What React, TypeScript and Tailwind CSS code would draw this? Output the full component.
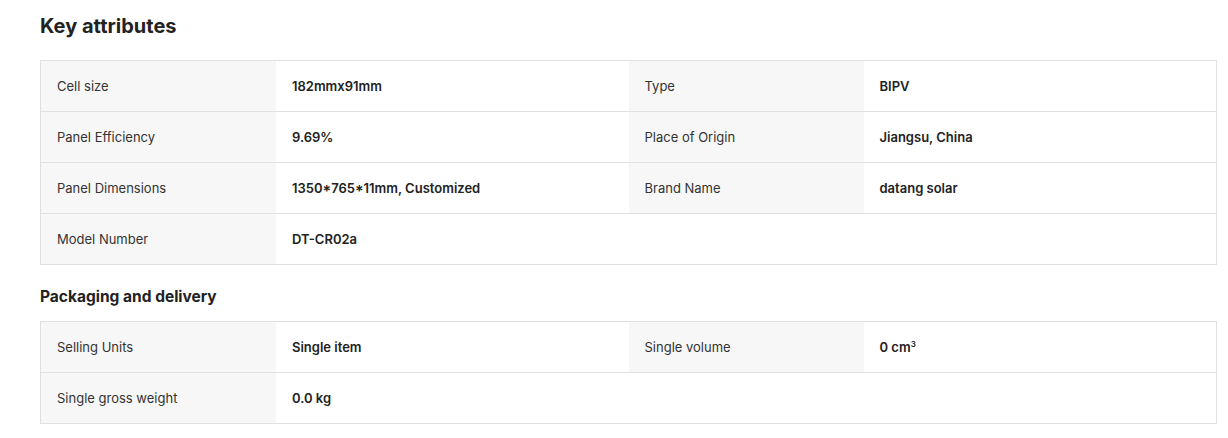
import React from "react";

type Attr = { label: string; value: React.ReactNode };

const keyAttrs: Attr[] = [
  { label: "Cell size", value: "182mmx91mm" },
  { label: "Type", value: "BIPV" },
  { label: "Panel Efficiency", value: "9.69%" },
  { label: "Place of Origin", value: "Jiangsu, China" },
  { label: "Panel Dimensions", value: "1350*765*11mm, Customized" },
  { label: "Brand Name", value: "datang solar" },
  { label: "Model Number", value: "DT-CR02a" },
];

const packaging: Attr[] = [
  { label: "Selling Units", value: "Single item" },
  {
    label: "Single volume",
    value: (
      <>
        0 cm<sup className="text-[8px]">3</sup>
      </>
    ),
  },
  { label: "Single gross weight", value: "0.0 kg" },
];

const AttrTable = ({ items }: { items: Attr[] }) => {
  // pair items two per row
  const rows: Attr[][] = [];
  for (let i = 0; i < items.length; i += 2) rows.push(items.slice(i, i + 2));

  return (
    <div className="border border-[#e0e0e0]">
      {rows.map((row, i) => (
        <div
          key={i}
          className={`grid h-[50px] grid-cols-[20fr_30fr_20fr_30fr] ${
            i > 0 ? "box-content border-t border-[#e0e0e0]" : ""
          }`}
        >
          {row.map((a) => (
            <React.Fragment key={a.label}>
              <div className="flex items-center bg-[#f7f7f7] px-4 pt-[2px] text-[13px] text-[#333]">
                {a.label}
              </div>
              <div className="flex items-center px-4 pt-[2px] text-[13px] font-semibold text-[#222]">
                {a.value}
              </div>
            </React.Fragment>
          ))}
        </div>
      ))}
    </div>
  );
}

export default function App() {
  return (
    <div className="min-h-[438px] bg-white pl-10 pr-[11px] pt-[12px] font-['Inter',sans-serif] text-[#222]">
      <h2 className="text-[20px] font-bold leading-[28px] text-[#222]">
        Key attributes
      </h2>
      <div className="mt-[20px]">
        <AttrTable items={keyAttrs} />
      </div>
      <h3 className="mt-[21px] text-[15.5px] font-bold leading-[22px] text-[#222]">
        Packaging and delivery
      </h3>
      <div className="mt-[13px]">
        <AttrTable items={packaging} />
      </div>
    </div>
  );
}
